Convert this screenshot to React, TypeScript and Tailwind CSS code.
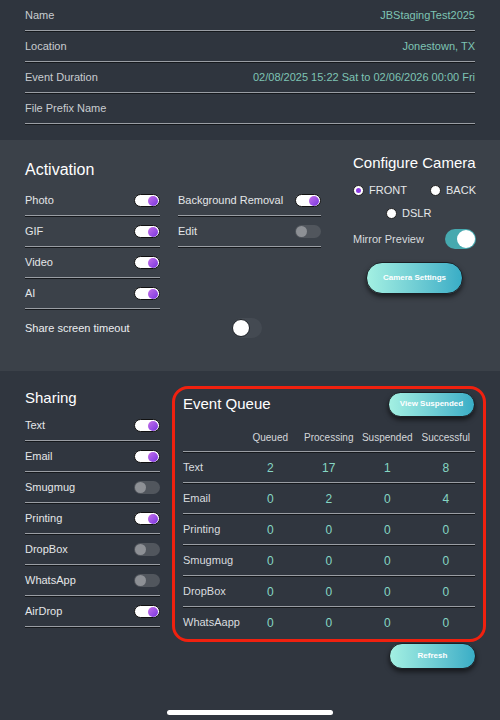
import React from "react";

const Line = () => (
  <div className="flex flex-col">
    <div className="h-px bg-[#9a9ea4]" />
    <div className="h-px bg-[#15181c]" />
  </div>
);

const Toggle = ({ on }: { on: boolean }) =>
  on ? (
    <div className="w-[26px] h-[13px] rounded-full bg-white border border-[#111] flex items-center justify-end pr-[1px] shrink-0">
      <div className="w-[10px] h-[10px] rounded-full bg-gradient-to-br from-[#c66ee8] to-[#7a2fe0]" />
    </div>
  ) : (
    <div className="w-[26px] h-[13px] rounded-full bg-[#51565d] flex items-center pl-[1px] shrink-0">
      <div className="w-[11px] h-[11px] rounded-full bg-[#8d9095]" />
    </div>
  );

const Row = ({ label, on }: { label: string; on: boolean }) => (
  <div>
    <div className="h-[29px] flex items-center justify-between text-[11px] text-[#e4e6e8]">
      <span>{label}</span>
      <Toggle on={on} />
    </div>
    <Line />
  </div>
);

const InfoRow = ({ label, value }: { label: string; value?: string }) => (
  <div>
    <div className="h-[29px] flex items-center justify-between text-[11px]">
      <span className="text-[#c9ccd0]">{label}</span>
      <span className="text-[#7ec4b4]">{value}</span>
    </div>
    <Line />
  </div>
);

const Radio = ({ label, checked }: { label: string; checked?: boolean }) => (
  <div className="flex items-center gap-[5px] text-[11px] text-[#e6e8ea]">
    <div className="w-[11px] h-[11px] rounded-full bg-white border border-[#222] flex items-center justify-center">
      {checked && <div className="w-[5px] h-[5px] rounded-full bg-[#8a3be0]" />}
    </div>
    <span>{label}</span>
  </div>
);

const GradButton = ({ label, w, h }: { label: string; w: string; h: string }) => (
  <div
    className={`${w} ${h} rounded-full bg-gradient-to-r from-[#a3f0e2] to-[#38adc6] border border-[#1b1f24] shadow-[0_3px_5px_rgba(0,0,0,0.55)] flex items-center justify-center text-[8px] font-bold text-white`}
  >
    {label}
  </div>
);

const queue = [
  ["Text", "2", "17", "1", "8"],
  ["Email", "0", "2", "0", "4"],
  ["Printing", "0", "0", "0", "0"],
  ["Smugmug", "0", "0", "0", "0"],
  ["DropBox", "0", "0", "0", "0"],
  ["WhatsAapp", "0", "0", "0", "0"],
];

export default function App() {
  return (
    <div
      className="w-[500px] h-[720px] overflow-hidden bg-[#30363e] flex flex-col"
      style={{ fontFamily: '"Liberation Sans", Arial, sans-serif' }}
    >
      {/* Top info */}
      <div className="h-[140px] px-[25px] pt-[1px] bg-[#2f353e] shrink-0">
        <InfoRow label="Name" value="JBStagingTest2025" />
        <InfoRow label="Location" value="Jonestown, TX" />
        <InfoRow label="Event Duration" value="02/08/2025 15:22 Sat to 02/06/2026 00:00 Fri" />
        <InfoRow label="File Prefix Name" />
      </div>

      {/* Activation */}
      <div className="h-[231px] bg-[#3b4149] pl-[25px] pr-[24px] flex shrink-0">
        <div className="w-[296px] pt-[19px]">
          <div className="h-[21px] flex items-center text-[16px] text-white">Activation</div>
          <div className="flex gap-[18px] mt-[6px]">
            <div className="w-[135px]">
              <Row label="Photo" on />
              <Row label="GIF" on />
              <Row label="Video" on />
              <Row label="AI" on />
            </div>
            <div className="w-[143px]">
              <Row label="Background Removal" on />
              <Row label="Edit" on={false} />
            </div>
          </div>
          <div className="h-[36px] flex items-center text-[11px] text-[#eceef0]">
            <span className="w-[207px]">Share screen timeout</span>
            <div className="w-[30px] h-[20px] rounded-full bg-[#444a52] flex items-center">
              <div className="w-[18px] h-[18px] rounded-full bg-white border border-[#1c2026]" />
            </div>
          </div>
        </div>
        <div className="ml-[32px] w-[123px] pt-[13px] flex flex-col">
          <div className="h-[20px] flex items-center text-[15px] text-white">Configure Camera</div>
          <div className="flex items-center mt-[10px] h-[14px]">
            <div className="w-[78px]">
              <Radio label="FRONT" checked />
            </div>
            <Radio label="BACK" />
          </div>
          <div className="flex items-center h-[14px] mt-[9px] pl-[33px]">
            <Radio label="DSLR" />
          </div>
          <div className="flex items-center justify-between mt-[8px] h-[22px]">
            <span className="text-[11px] text-[#d8dbde]">Mirror Preview</span>
            <div className="w-[31px] h-[20px] rounded-full bg-[#46a9af] flex items-center justify-end pr-[1px]">
              <div className="w-[18px] h-[18px] rounded-full bg-white" />
            </div>
          </div>
          <div className="mt-[12px] pl-[13px]">
            <GradButton label="Camera Settings" w="w-[97px]" h="h-[32px]" />
          </div>
        </div>
      </div>

      {/* Sharing + Event Queue */}
      <div className="flex-1 bg-[#30363f] pl-[25px] pt-[15px] relative">
        <div className="flex">
          <div className="w-[135px] pt-[2px]">
            <div className="h-[21px] flex items-center text-[15px] text-white">Sharing</div>
            <div className="mt-[2px]">
              <Row label="Text" on />
              <Row label="Email" on />
              <Row label="Smugmug" on={false} />
              <Row label="Printing" on />
              <Row label="DropBox" on={false} />
              <Row label="WhatsApp" on={false} />
              <Row label="AirDrop" on />
            </div>
          </div>
          <div className="ml-[12px] w-[314px] flex flex-col">
            <div className="h-[256px] rounded-[16px] border-[3px] border-[#f0210f] pl-[8px] pr-[8px]">
              <div className="flex items-center justify-between h-[30px]">
                <span className="text-[15px] text-white">Event Queue</span>
                <GradButton label="View Suspended" w="w-[87px]" h="h-[25px]" />
              </div>
              <div className="grid grid-cols-[58px_1fr_1fr_1fr_1fr] h-[32px] items-center text-[10px] text-[#d4d7da] pt-[4px]">
                <span />
                <span className="text-center">Queued</span>
                <span className="text-center">Processing</span>
                <span className="text-center">Suspended</span>
                <span className="text-center">Successful</span>
              </div>
              <Line />
              {queue.map((r, i) => (
                <div key={r[0]}>
                  <div className="grid grid-cols-[58px_1fr_1fr_1fr_1fr] h-[29px] items-center text-[11px]">
                    <span className="text-[#d9dcdf]">{r[0]}</span>
                    {r.slice(1).map((v, j) => (
                      <span key={j} className="text-center text-[#86d6c4] text-[12px]">
                        {v}
                      </span>
                    ))}
                  </div>
                  {i < queue.length - 1 && <Line />}
                </div>
              ))}
            </div>
            <div className="flex justify-end pr-[10px] mt-[1px]">
              <GradButton label="Refresh" w="w-[87px]" h="h-[26px]" />
            </div>
          </div>
        </div>
        <div className="absolute left-[167px] bottom-[5px] w-[166px] h-[5px] rounded-full bg-white" />
      </div>
    </div>
  );
}
